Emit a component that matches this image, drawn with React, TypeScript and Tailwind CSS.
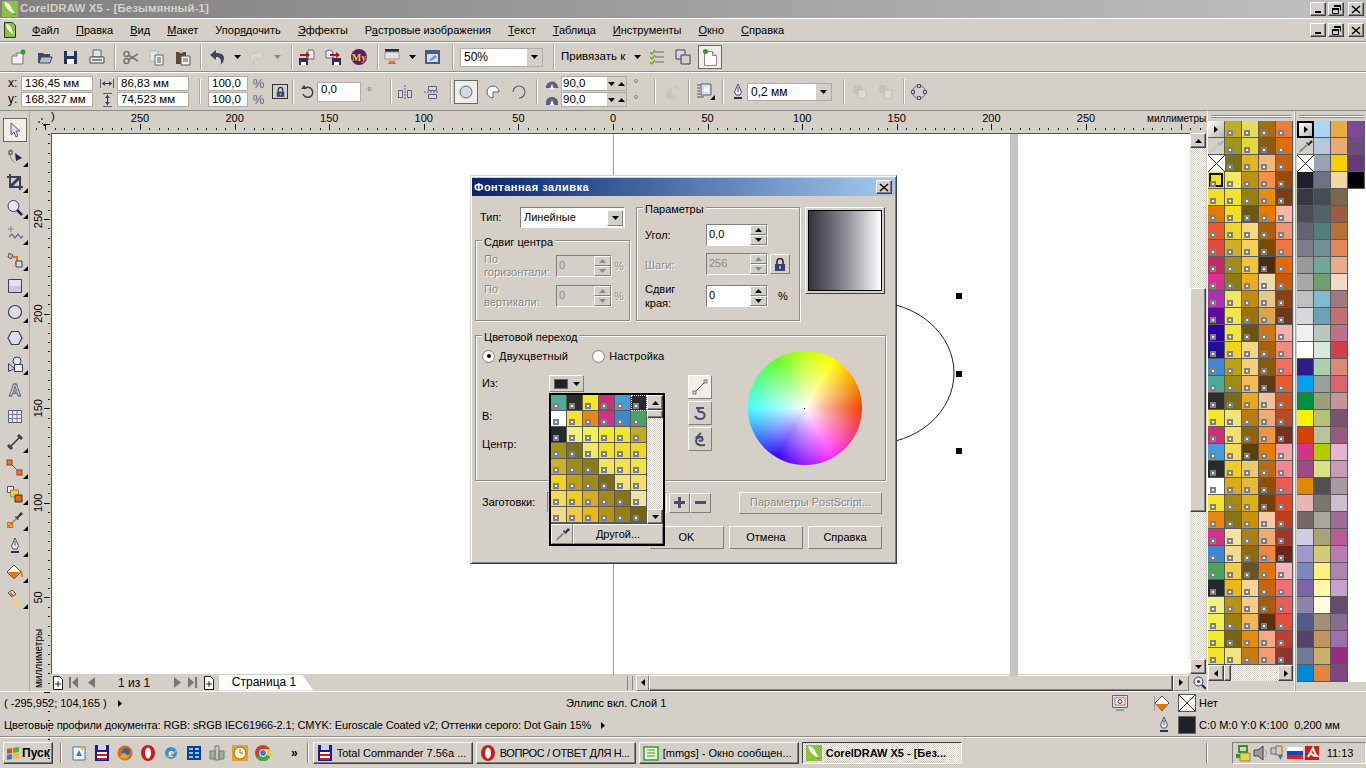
import React from 'react';

const RAISED = "border border-t-white border-l-white border-r-[#404040] border-b-[#404040] shadow-[inset_-1px_-1px_0_#808080]";
const FLAT = "border border-t-white border-l-white border-r-[#808080] border-b-[#808080]";
const SUNK = "border border-t-[#808080] border-l-[#808080] border-r-white border-b-white";
const DITHER = "bg-[repeating-conic-gradient(#ffffff_0_25%,#d4d0c8_0_50%)] bg-[length:2px_2px]";
const OFF = "text-[#8c8a84] [text-shadow:1px_1px_0_#ffffff]";

const Svg = ({ w = 16, h = 16, children }: { w?: number; h?: number; children?: React.ReactNode }) => (
  <svg width={w} height={h} viewBox={`0 0 ${w} ${h}`} className="block shrink-0 overflow-visible">{children}</svg>
);
const Down = ({ c = "#000" }: { c?: string }) => <Svg w={7} h={4}><path d="M0 0h7L3.5 4z" fill={c} /></Svg>;
const Up = ({ c = "#000" }: { c?: string }) => <Svg w={7} h={4}><path d="M0 4h7L3.5 0z" fill={c} /></Svg>;
const Left = () => <Svg w={4} h={7}><path d="M4 0v7L0 3.5z" fill="#000" /></Svg>;
const Right = () => <Svg w={4} h={7}><path d="M0 0v7l4-3.5z" fill="#000" /></Svg>;

const Sep = () => <div className="w-[2px] h-[25px] shrink-0 border-l border-[#a8a59d] bg-white" />;

// toolbar
const INew = () => <Svg><path d="M1 7l5-3h6v11H1z" fill="#f4f4f4" stroke="#777" /><path d="M1 7h5V4" fill="#ccc" stroke="#777" /><circle cx="12" cy="3" r="2.5" fill="#2e9e1e" /></Svg>;
const IOpen = () => <Svg><path d="M1 4h5l1 1h6v9H1z" fill="#3f4868" /><path d="M2 14l2-6h11l-2 6z" fill="#b9bccb" stroke="#3f4868" /></Svg>;
const ISave = () => <Svg><path d="M1 2h13v13H1z" fill="#2a315c" /><path d="M4 2h7v5H4z" fill="#d8d8e4" /><path d="M4 10h7v5H4z" fill="#fff" /></Svg>;
const IPrint = () => <Svg><path d="M4 1h8v7H4z" fill="#cfe8e8" stroke="#666" /><path d="M1 8h14v6H1z" fill="#eee" stroke="#444" /><path d="M3 11h10" stroke="#222" /></Svg>;
const ICut = () => <Svg><circle cx="3.5" cy="12" r="2.5" fill="none" stroke="#777" strokeWidth="1.5" /><circle cx="3.5" cy="5" r="2.5" fill="none" stroke="#777" strokeWidth="1.5" /><path d="M5 6l10 6M5 11l10-6" stroke="#777" strokeWidth="1.5" /></Svg>;
const ICopy = () => <Svg><path d="M1 2h8v10H1z" fill="#dfe9e4" stroke="#a9c4b8" /><path d="M6 6h8v10H6z" fill="#f4f4f4" stroke="#666" /><path d="M8 9h4M8 11h4M8 13h4" stroke="#555" /></Svg>;
const IPaste = () => <Svg><path d="M1 3h10v12H1z" fill="#5c4a34" /><circle cx="6" cy="2.5" r="2" fill="#c0c0c0" /><path d="M6 7h9v9H6z" fill="#f4f4f4" stroke="#555" /><path d="M8 10h5M8 12h5" stroke="#555" /></Svg>;
const IUndo = ({ c = "#3a4568" }: { c?: string }) => <Svg><path d="M7 1L1 6l6 5V8c3 0 5 1 5 5 0 1 0 2-1 3 3-2 4-4 4-7 0-4-4-5-8-5z" fill={c} /></Svg>;
const IRedo = () => <Svg><path d="M9 1l6 5-6 5V8c-3 0-5 1-5 5 0 1 0 2 1 3-3-2-4-4-4-7 0-4 4-5 8-5z" fill="#d9dad8" stroke="#c4c2bb" /></Svg>;
const IImp = () => <Svg><path d="M9 1h5l1 2v7H9z" fill="#eef0f4" stroke="#667" /><path d="M0 9h9v7H0z" fill="#2a315c" /><path d="M2 13h5v3H2z" fill="#fff" /><path d="M1 5h6V3l4 3-4 3V7H1z" fill="#b01818" /></Svg>;
const IExp = () => <Svg><path d="M1 2l4-1 3 2v6H1z" fill="#eef0f4" stroke="#667" /><path d="M7 9h9v7H7z" fill="#2a315c" /><path d="M9 13h5v3H9z" fill="#fff" /><path d="M5 5h6V3l4 3-4 3V7H5z" fill="#b01818" /></Svg>;
const IMy = () => <Svg><circle cx="8" cy="8" r="8" fill="#5a1a78" /><text x="8" y="11.5" textAnchor="middle" fontSize="10" fontWeight="700" fill="#f2c81e" fontFamily="Liberation Serif, serif">My</text></Svg>;
const ILaunch = () => <Svg w={14} h={16}><path d="M0 0h14v3H0z" fill="#23284a" /><path d="M0 3h14v7H0z" fill="#e3e3e6" stroke="#999" /><path d="M3 15l2-4 2 2 2-2 2 4z" fill="#f0641e" /></Svg>;
const IWelcome = () => <Svg><path d="M0 1h15v14H0z" fill="#4a5a86" /><path d="M2 5h11v8H2z" fill="#d4deee" /><path d="M4 11l6-5 2 2-6 4z" fill="#7a8cb4" /></Svg>;
const IOpts = () => <Svg w={14} h={16}><path d="M5 3h9M5 8h9M5 13h9" stroke="#64688a" /><path d="M0 3l2 2 3-4M0 8l2 2 3-4M0 13l2 2 3-4" stroke="#6ca81e" strokeWidth="1.4" fill="none" /></Svg>;
const IBoxes = () => <Svg><path d="M1 1h9v9H1z" fill="#d6d7e2" stroke="#3a3f5c" /><path d="M6 6h9v9H6z" fill="#d4d0c8" stroke="#3a3f5c" /></Svg>;
const IPage = () => <Svg w={16} h={18}><path d="M2.500 3.500h8l4 4v10h-12z" fill="#fff" stroke="#888" /><path d="M10.500 3.500v4h4" fill="#ddd" stroke="#888" /><circle cx="3.500" cy="3.500" r="2.500" fill="#2e9e1e" /></Svg>;

// property bar
const IW = () => <Svg w={14} h={9}><path d="M.5 0v9M13.500 0v9" stroke="#555c80" /><path d="M2 4.500h10" stroke="#333" /><path d="M2 4.500L5 2v5zM12 4.500L9 2v5z" fill="#3a4568" /></Svg>;
const IH = () => <Svg w={9} h={14}><path d="M0 .5h9M0 13.500h9" stroke="#555c80" /><path d="M4.500 2v10" stroke="#333" /><path d="M4.500 2L2 5h5zM4.500 12L2 9h5z" fill="#3a4568" /></Svg>;
const ILock = ({ w = 12, h = 13 }: { w?: number; h?: number }) => <svg width={w} height={h} viewBox="0 0 12 13" className="block shrink-0"><path d="M3 6V3.500a3 3 0 0 1 6 0V6" fill="none" stroke="#1a1a3a" strokeWidth="1.500" /><path d="M1 6h10v7H1z" fill="#3c4274" /><path d="M5 8h2v3H5z" fill="#aab" /></svg>;
const IRot = () => <Svg w={14} h={14}><path d="M3 4a5 5 0 1 1-1 5" fill="none" stroke="#3a3f5c" strokeWidth="1.500" /><path d="M0 4h6L3 0z" fill="#3a3f5c" /></Svg>;
const IMirH = () => <Svg><path d="M1.500 6.500h4v7h-4zM10.500 6.500h4v7h-4z" fill="#d6d7e2" stroke="#5c617e" /><path d="M8 1v14" stroke="#5c617e" strokeDasharray="2 1" /></Svg>;
const IMirV = () => <Svg><path d="M5.500 2.500h8v4h-8zM5.500 10.500h8v4h-8z" fill="#d6d7e2" stroke="#5c617e" /><path d="M1 8h14" stroke="#5c617e" strokeDasharray="2 1" /></Svg>;
const ICirc = () => <Svg w={14} h={14}><circle cx="7" cy="7" r="6" fill="#d6d7e2" stroke="#5c617e" /></Svg>;
const IPie = () => <Svg w={14} h={14}><path d="M7 7h6A6 6 0 1 0 7 13z" fill="#fff" stroke="#5c617e" /></Svg>;
const IArc = () => <Svg w={14} h={14}><path d="M13 7A6 6 0 1 0 7 13" fill="none" stroke="#5c617e" strokeWidth="1.200" transform="rotate(90 7 7)" /></Svg>;
const ICw = ({ flip = false }: { flip?: boolean }) => <Svg w={14} h={10}><path d={flip ? "M1 7a6 5 0 0 1 12 0v3H1z" : "M1 9a6 6 0 0 1 12-1l1 1H1z"} fill="#5c617e" /><path d="M5 10l2-5 2 5z" fill="#fff" /></Svg>;
const IPie2 = () => <Svg w={14} h={18}><path d="M6 5v6l5 3A6 6 0 1 1 6 5z" fill="#c6c4bd" /><path d="M8 2l3 2-3 2z" fill="#c6c4bd" /><path d="M11 4a4 4 0 0 1 2 4" stroke="#c6c4bd" fill="none" /></Svg>;
const IShadow = () => <Svg w={18} h={17}><path d="M0 2h7M0 5h3M0 8h3M0 11h3M0 14h7" stroke="#555" /><path d="M4 1h10v11H4z" fill="#dcdde6" stroke="#555c80" /><path d="M7 4h5v5H7z" fill="#f6f6f8" /><path d="M18 12v5h-5z" fill="#111" /></Svg>;
const IPen = () => <Svg w={10} h={16}><path d="M5 0l3.500 8-1.500 3H3L1.500 8z" fill="#eee" stroke="#4a4f6c" /><path d="M5 3v5" stroke="#4a4f6c" /><path d="M1 13h8v2H1z" fill="#2c3152" /></Svg>;
const IOrd = ({ flip = false }: { flip?: boolean }) => <Svg w={15} h={15}><path d={flip ? "M1 1h8v8H1z" : "M1 1h9v9H1z"} fill="#c6c4bd" /><path d="M6 6h8v8H6z" fill="#dcdad3" stroke="#c0beb6" /></Svg>;
const INodes = () => <Svg w={16} h={16}><circle cx="8" cy="8" r="6.500" fill="none" stroke="#5c617e" /><path d="M6.500.5h3v3h-3zM.5 6.500h3v3h-3zM12.500 6.500h3v3h-3zM6.500 12.500h3v3h-3z" fill="#c8c9d8" stroke="#4a4f6c" /></Svg>;

// toolbox
const TPick = () => <Svg><path d="M4 1v12l3-3 2 5 2-1-2-5h4z" fill="#dde" stroke="#5c617e" /></Svg>;
const TShape = () => <Svg><path d="M4 1C2 6 3 11 8 15" fill="none" stroke="#888" /><rect x="2" y="3" width="3" height="3" fill="#fff" stroke="#333" /><path d="M8 5l7 5-6 3z" fill="#23284a" /></Svg>;
const TCrop = () => <Svg><path d="M3 0v13h13M0 3h13v13" fill="none" stroke="#3a3f5c" strokeWidth="2" /><path d="M3 13L13 3" stroke="#3a3f5c" strokeWidth="3" /></Svg>;
const TZoom = () => <Svg><circle cx="6.500" cy="6" r="5.500" fill="#e6e7ef" stroke="#3a3f5c" /><path d="M10 10l5 5" stroke="#23284a" strokeWidth="2.500" /></Svg>;
const TFree = () => <Svg><path d="M4 0v6M1 3h6" stroke="#888" /><path d="M2 11l3-3 3 4 3-4 3 4 2-2" fill="none" stroke="#6c7090" strokeWidth="1.300" /></Svg>;
const TSmart = () => <Svg><path d="M2 1l4 2-2 4-3-2z" fill="#bbb" stroke="#555" /><path d="M6 5h4v6h-2" fill="none" stroke="#e07010" strokeWidth="2" /><path d="M9 9h6v6H9z" fill="#d8d8e4" stroke="#3a3f5c" /></Svg>;
const TRect = () => <Svg><path d="M1.500 1.500h13v13h-13z" fill="#e2e3ec" stroke="#3a3f5c" /><path d="M2 8h12v6H2z" fill="#c9cbd8" /></Svg>;
const TEll = () => <Svg><circle cx="8" cy="8" r="6.500" fill="#dcdde6" stroke="#3a3f5c" strokeWidth="1.200" /></Svg>;
const THex = () => <Svg><path d="M4.500 1.500h7L15 8l-3.500 6.500h-7L1 8z" fill="#dcdde6" stroke="#3a3f5c" strokeWidth="1.200" /></Svg>;
const TBasic = () => <Svg><circle cx="10" cy="5" r="4" fill="#e6e7ef" stroke="#3a3f5c" /><path d="M1.500 7.500l6 5-6 3z" fill="#cfd0dc" stroke="#3a3f5c" /><path d="M7.500 8.500h8v7h-8z" fill="#eceded" stroke="#3a3f5c" /></Svg>;
const TText = () => <Svg><text x="8" y="14" textAnchor="middle" fontSize="17" fontWeight="700" fill="#dcdde6" stroke="#4a4f6c" strokeWidth=".8" fontFamily="Liberation Sans, sans-serif">A</text></Svg>;
const TTable = () => <Svg><path d="M1.500 2.500h13v12h-13z" fill="#e8e8ee" stroke="#555c80" /><path d="M1 6.500h14M1 10.500h14M5.500 3v11M10 3v11" stroke="#777b96" /></Svg>;
const TDim = () => <Svg><path d="M2 14L14 2" stroke="#333" strokeWidth="1.500" /><path d="M0 12l4 4 2-2-4-4zM10 2l4 4 2-2-4-4z" fill="#3a3f5c" /></Svg>;
const TConn = () => <Svg><path d="M3 3l9 9" stroke="#555c80" /><rect x="0" y="0" width="5" height="5" fill="#f07818" stroke="#843" /><rect x="10" y="10" width="5" height="5" fill="#f07818" stroke="#843" /></Svg>;
const TBlend = () => <Svg><path d="M.5.5h6v6h-6z" fill="#eee" stroke="#555" /><path d="M3.500 4h8v7h-8z" fill="#fbc84a" stroke="#885" /><path d="M8 9h7v7H8z" fill="#f0620a" stroke="#333" /></Svg>;
const TDrop = () => <Svg><path d="M10 5l4-5 2 2-5 4z" fill="#23284a" /><path d="M9 4l3 3-1 1-3-3z" fill="#23284a" /><path d="M9 6l1 1-5 5-2 1 1-2z" fill="#6f8f90" /><path d="M0 10h6v6H0z" fill="#e07010" /><path d="M1 11h2v2H1zM3 13h2v2H3z" fill="#f4b060" /></Svg>;
const TFill = () => <Svg><path d="M7 1l7 7-7 7-7-7z" fill="#fff" stroke="#555" /><path d="M1 8h12l-6 7z" fill="#e8740c" /><path d="M13 6c2 1 2 4 2 7" stroke="#e8740c" strokeWidth="1.500" fill="none" /></Svg>;
const TIFill = () => <Svg><path d="M1 3l4-3 4 4-4 3z" fill="#ddd" stroke="#555" /><path d="M3 3l3 3" stroke="#e07010" strokeWidth="2" /><path d="M9 7l5 9H5z" fill="#f4cc80" /></Svg>;

const Tool = ({ active, tri = true, children }: { active?: boolean; tri?: boolean; children: React.ReactNode }) => (
  <div className="relative w-[24px] h-[26px] flex items-center justify-center">
    {active ? <div className="w-[24px] h-[24px] bg-[#f2efe8] border border-[#6c6a64] flex items-center justify-center">{children}</div> : children}
    {tri && !active && <svg width="5" height="5" className="absolute right-[-1px] bottom-[2px]"><path d="M5 0v5H0z" fill="#000" /></svg>}
  </div>
);

// task bar
const QIe = () => <Svg><circle cx="8" cy="8" r="6" fill="#3a90d8" /><text x="8" y="12" textAnchor="middle" fontSize="12" fontWeight="700" fill="#fff" fontFamily="Liberation Serif, serif">e</text><path d="M1 12c3 2 12-4 14-10" fill="none" stroke="#e8c83c" /></Svg>;
const QDesk = () => <Svg><path d="M2 2h12v13H2z" fill="#f6f6ff" stroke="#3a70c0" /><path d="M5 11l3-6 3 6z" fill="#3a80d0" /><path d="M9 3l3-2v5z" fill="#f0b020" /></Svg>;
const QTc = () => <Svg><path d="M1 0h14v16H1z" fill="#1c1c8c" /><path d="M4 0h8v5H4z" fill="#d0d0e8" /><path d="M3 7h10v2H3z" fill="#fff" /><path d="M3 9h10v2H3z" fill="#d81818" /><path d="M3 11h10v2H3z" fill="#fff" /><path d="M3 13h10v2H3z" fill="#d81818" /></Svg>;
const QFf = () => <Svg><circle cx="8" cy="8" r="7.500" fill="#d86a10" /><circle cx="9" cy="7" r="4" fill="#3a60a8" /><path d="M3 13c5 2 9 0 10-4-2 2-4 1-5-1-2 0-4 1-5 5z" fill="#f0a020" /></Svg>;
const QOp = () => <Svg><ellipse cx="8" cy="8" rx="7" ry="8" fill="#d01818" /><ellipse cx="8" cy="8" rx="3" ry="5.500" fill="#fff" /></Svg>;
const QTv = () => <Svg><path d="M1 1h14v14H1z" fill="#1838a0" /><path d="M3 3h4v2H3zM9 3h4v2H9zM3 7h4v2H3zM9 7h4v2H9zM3 11h4v2H3zM9 11h4v2H9z" fill="#7ad0f0" /></Svg>;
const QPlug = () => <Svg><path d="M6 1h4v14H6z" fill="#c8c8c8" stroke="#777" /><path d="M1 6h5v8H1zM10 6h5v8h-5z" fill="#98b890" stroke="#777" /></Svg>;
const QClock = () => <Svg><path d="M0 0h16v16H0z" fill="#e8a020" /><circle cx="8" cy="8" r="6" fill="#fff6d8" stroke="#a86808" /><path d="M8 4v4h3" stroke="#a86808" fill="none" /></Svg>;
const QCh = () => <Svg><circle cx="8" cy="8" r="8" fill="#d83a2c" /><path d="M8 8L1 12a8 8 0 0 0 7 4 8 8 0 0 0 7-4z" fill="#3caa44" /><path d="M8 8l7 4a8 8 0 0 0 0-8H8z" fill="#f0c828" /><circle cx="8" cy="8" r="3.500" fill="#3878d8" stroke="#fff" /></Svg>;
const Logo = () => <Svg><path d="M0 0h16v16H0z" fill="#8cc040" /><path d="M2 1c4 0 7 3 8 7l4 6-5-3C6 9 3 6 2 1z" fill="#f6f8ee" /><path d="M12 12l2 2-3-1z" fill="#27401a" /></Svg>;
const DocLogo = () => <Svg w={12} h={16}><path d="M.5.5h8l3 3v12h-11z" fill="#8cc040" stroke="#27401a" /><path d="M2 2c3 0 5 3 6 6l2 5-4-3C4 8 2 5 2 2z" fill="#f6f8ee" /></Svg>;
const Flag = () => <Svg w={14} h={13}><path d="M1 2l5-1v5l-5 1z" fill="#e84818" /><path d="M7 1l6-1v5l-6 1z" fill="#58b030" /><path d="M1 8l5-1v5l-5 1z" fill="#3878d8" /><path d="M7 7l6-1v5l-6 1z" fill="#f0c020" /></Svg>;

const P1: string[][] = [
  ["", "#bfae22", "#e8dc5e", "#a86c0c", "#ee7c3c"], ["", "#a19516", "#e6d644", "#8a5c10", "#e46c04"], ["", "#77701c", "#e2b622", "#f4b77c", "#c85e10"],
  ["#f2e224", "#f3ea60", "#bb9415", "#f48f44", "#984a08"], ["#f2e024", "#f2e42c", "#97800f", "#e48e10", "#7c3d10"], ["#e07a00", "#f2e024", "#6a5815", "#e67a00", "#f4b6a6"],
  ["#e85a2c", "#f0d820", "#f4da7c", "#ab6006", "#f09478"], ["#e04a3a", "#cdb028", "#f6d058", "#7a4a06", "#ee7844"], ["#c02c60", "#a08c18", "#f4c43c", "#4c2c10", "#e46808"],
  ["#d83090", "#8c7c14", "#eeac20", "#ecdcac", "#c45e0e"], ["#ae30b4", "#f2e65c", "#c68c08", "#e8c888", "#8c4010"], ["#600ca0", "#f2e44c", "#9a7408", "#e0a44c", "#6c3820"],
  ["#2c00a0", "#f4e440", "#6a5410", "#cc780c", "#f2b0b0"], ["#201090", "#eed41c", "#f4d684", "#aa6406", "#f08c84"], ["#4088d0", "#bca010", "#f6d078", "#8c5a0c", "#f0705c"],
  ["#4cac98", "#a08c14", "#f0bc58", "#5c3c14", "#e65c30"], ["#302c28", "#7a6c14", "#eca81c", "#f2c09c", "#cc5424"], ["#f2e824", "#f2e478", "#b87c10", "#f0ac78", "#b04c2c"],
  ["#c83078", "#f4e068", "#8c6410", "#f09444", "#782e20"], ["#449cd8", "#f4dc58", "#5c400c", "#e87c08", "#f0a0a8"], ["#282c2c", "#f4cc20", "#e8cc68", "#bc6810", "#f08898"],
  ["#ffffff", "#d8ac20", "#e4bc3c", "#8c5008", "#e85c58"], ["#f4e42c", "#a88814", "#e0b01c", "#744008", "#e0482c"], ["#e88814", "#887414", "#cc9008", "#f8c8a4", "#c03c20"],
  ["#d03088", "#f0e4a0", "#ac8014", "#f0a874", "#a03828"], ["#3c88d0", "#f0dc8c", "#8c6c10", "#ec8844", "#6c2418"], ["#48a460", "#f0cc48", "#685420", "#e47404", "#f4b4bc"],
  ["#24282c", "#ecb814", "#f4d498", "#c8640c", "#ee707c"], ["#f2f080", "#b89414", "#f8cc88", "#a85c08", "#e85c5c"], ["#f0f050", "#98800c", "#f4b45c", "#5c3010", "#e05040"],
  ["#f0ec28", "#786410", "#e88c0c", "#f4a888", "#bc4030"], ["#f2e428", "#f0e480", "#c87c10", "#f09c74", "#903430"],
];
const P2: string[][] = [
  ["", "#acd4f8", "#e8ac44", "#7c489c"], ["", "#b8c8d8", "#e8ac70", "#6c4c7c"], ["", "#98a4b4", "#f4d000", "#68387c"], ["#20202c", "#6c7484", "#f4d8a4", "#000000"],
  ["#383840", "#444c58", "#786850"], ["#4c4c54", "#506468", "#9c5c40"], ["#646470", "#508078", "#b87034"], ["#7c7c88", "#709098", "#e08858"], ["#989898", "#70a898", "#e8ac8c"],
  ["#a8a8ac", "#70a070", "#f4d8c8"], ["#c0c0c4", "#80bcd0", "#a07880"], ["#d8d8dc", "#6ca0b8", "#c07070"], ["#f0f0f0", "#b8c8bc", "#c07088"], ["#ffffff", "#d8e8d8", "#d04048"],
  ["#301c88", "#acd0ac", "#e08878"], ["#00a0ec", "#98a098", "#dc6470"], ["#00903c", "#98a080", "#c89498"], ["#fff200", "#b8c078", "#785470"], ["#d84000", "#b8c498", "#985880"],
  ["#d43488", "#b4cc00", "#e8b4d0"], ["#9c4c84", "#dce084", "#c89cb8"], ["#e08800", "#505050", "#a898a8"], ["#e8b4b4", "#787870", "#ccc0cc"], ["#786868", "#a8a898", "#a06c9c"],
  ["#d0cce4", "#a8a478", "#b85c98"], ["#a098c8", "#d4cc74", "#b87cb0"], ["#7c88c0", "#fff080", "#a888ac"], ["#7c64a8", "#fff8a8", "#c8a0cc"], ["#8c84ac", "#fffce0", "#644c70"],
  ["#505c88", "#a09078", "#886c90"], ["#504468", "#c49460", "#9c70ac"], ["#707c9c", "#ccb068", "#982c84"], ["#0088d8", "#e08440", "#804484"],
];
const POP: string[] = [
  "#4cac98", "#302c28", "#f2e824", "#c83078", "#449cd8", "#282c2c", "#ffffff", "#f4e42c", "#e88814", "#d03088", "#3c88d0", "#48a460",
  "#24282c", "#f2f080", "#f0f050", "#f0ec28", "#f2e428", "#bfae22", "#a19516", "#77701c", "#f3ea60", "#f2e224", "#f2e024", "#f0d820",
  "#cdb028", "#a08c18", "#8c7c14", "#f2e65c", "#f2e44c", "#f4e440", "#eed41c", "#bca010", "#a08c14", "#7a6c14", "#f2e478", "#f4e068",
  "#f4dc58", "#f4cc20", "#d8ac20", "#a88814", "#887414", "#f0e4a0", "#f0dc8c", "#f0cc48", "#ecb814", "#b89414", "#98800c", "#786410",
];

const Mark = () => <span className="absolute left-[2px] bottom-[1px] w-[6px] h-[6px] bg-[#eeeeee] border-2 border-[#808080]" />;
const XCell = () => <svg width="17" height="17" className="block bg-white"><path d="M0 0l17 17M17 0L0 17" stroke="#333" /></svg>;
const Dropper = ({ c = "#23284a" }: { c?: string }) => <Svg w={15} h={15}><path d="M10 5l3-4 2 2-4 3z" fill={c} /><path d="M9 3l3 3-1 1-3-3z" fill={c} /><path d="M9 5l1 1-6 6-3 2 1-3z" fill={c === "#23284a" ? "#6f8f90" : "#c8c8c8"} /></Svg>;

const Palette1 = () => (
  <div className="grid grid-cols-[repeat(5,17px)] auto-rows-[17px]">
    {P1.flatMap((r, i) => r.map((c, j) => {
      if (c === "" && i === 0) return <div key={`${i}${j}`} className="flex items-center justify-center border-r border-b border-[#5a5a5a] bg-gradient-to-br from-white to-[#b8b6b0]"><Right /></div>;
      if (c === "" && i === 1) return <div key={`${i}${j}`} className="flex items-center justify-center border-r border-b border-[#5a5a5a] bg-[#d4d0c8]"><Dropper c="#b0aea8" /></div>;
      if (c === "") return <div key={`${i}${j}`} className="border-r border-b border-[#5a5a5a]"><XCell /></div>;
      return (
        <div key={`${i}${j}`} className="relative border-r border-b border-[#5a5a5a]" style={{ backgroundColor: c }}>
          {i === 3 && j === 0 && <span className="absolute inset-[1px] border-2 border-black" />}
          <Mark />
        </div>
      );
    }))}
  </div>
);

const Palette2 = () => (
  <div className="grid grid-cols-[repeat(4,17px)] auto-rows-[17px]">
    {P2.flatMap((r, i) => [...r, ...(r.length === 3 ? ["w"] : [])].map((c, j) => {
      if (c === "w") return <div key={`${i}${j}`} />;
      if (c === "" && i === 0) return <div key={`${i}${j}`} className="flex items-center justify-center border-2 border-black bg-gradient-to-br from-white to-[#b8b6b0]"><Right /></div>;
      if (c === "" && i === 1) return <div key={`${i}${j}`} className="flex items-center justify-center border-r border-b border-[#5a5a5a] bg-[#d4d0c8]"><Dropper /></div>;
      if (c === "") return <div key={`${i}${j}`} className="border-r border-b border-[#5a5a5a]"><XCell /></div>;
      return <div key={`${i}${j}`} className="border-r border-b border-[#5a5a5a]" style={{ backgroundColor: c }} />;
    }))}
  </div>
);

const TopRuler = () => {
  const ticks: number[] = [];
  for (let k = -62; k <= 62; k++) ticks.push(583 + k * 9.46);
  return (
    <svg width="1176" height="22" className="block overflow-visible">
      {ticks.map((x, i) => {
        const big = (i - 62) % 10 === 0;
        return <rect key={i} x={Math.round(x)} y={big ? 13 : 17} width="1" height={big ? 6 : 2} fill="#111" />;
      })}
      {[250, 200, 150, 100, 50, 0, 50, 100, 150, 200, 250].map((v, i) => (
        <text key={i} x={110 + i * 94.6} y="11" textAnchor="middle" fontSize="11" fill="#000">{v}</text>
      ))}
      <text x="1117" y="11" fontSize="10" fill="#000">миллиметры</text>
      <text x="21" y="9" fontSize="11" fill="#000">)</text>
      <path d="M12 7v3M8 11h3M14 13v2M12 12l4 4" stroke="#000" strokeDasharray="2 1" fill="none" />
    </svg>
  );
};

const LeftRuler = () => {
  const ticks: number[] = [];
  for (let k = -10; k <= 60; k++) ticks.push(219 - 133 + k * 9.46);
  return (
    <svg width="21" height="560" className="block overflow-visible">
      {ticks.map((y, i) => {
        const big = (i - 10) % 10 === 0;
        return <rect key={i} x={big ? 14 : 18} y={Math.round(y)} width={big ? 6 : 2} height="1" fill="#111" />;
      })}
      {[250, 200, 150, 100, 50].map((v, i) => (
        <text key={i} transform={`translate(12 ${86 + i * 94.6}) rotate(-90)`} textAnchor="middle" fontSize="11" fill="#000">{v}</text>
      ))}
      <text transform="translate(12 555) rotate(-90)" fontSize="10" fill="#000">миллиметры</text>
    </svg>
  );
};

const Spin = ({ w, off, val }: { w: string; off?: boolean; val: string }) => (
  <div className={`${w} h-[22px] shrink-0 flex ${SUNK} ${off ? "bg-[#d4d0c8]" : "bg-white"}`}>
    <span className={`flex-1 pl-[2px] leading-[18px] ${off ? "text-[#8c8a84]" : ""}`}>{val}</span>
    <div className="w-[17px] flex flex-col bg-[#d4d0c8]">
      <div className={`flex-1 flex items-center justify-center ${FLAT}`}><Up c={off ? "#8c8a84" : "#000"} /></div>
      <div className={`flex-1 flex items-center justify-center ${FLAT}`}><Down c={off ? "#8c8a84" : "#000"} /></div>
    </div>
  </div>
);

const Group = ({ title, className, children }: { title: string; className: string; children?: React.ReactNode }) => (
  <div className={`relative border border-[#8e8c86] shadow-[1px_1px_0_#ffffff,inset_1px_1px_0_#ffffff] ${className}`}>
    <span className="absolute top-[-6px] left-[6px] px-[2px] bg-[#d4d0c8] leading-[14px]">{title}</span>
    {children}
  </div>
);

const Btn = ({ w, off, children }: { w: string; off?: boolean; children: React.ReactNode }) => (
  <div className={`${w} flex items-center justify-center ${FLAT} ${off ? OFF : ""}`}>{children}</div>
);

const Radio = ({ on }: { on?: boolean }) => (
  <div className="w-[13px] h-[13px] rounded-full bg-white border border-[#808080] flex items-center justify-center">{on && <div className="w-[4px] h-[4px] rounded-full bg-black" />}</div>
);

const Dialog = () => (
  <div className="absolute left-[470px] top-[175px] w-[427px] h-[389px] bg-[#d4d0c8] border border-t-[#d4d0c8] border-l-[#d4d0c8] border-r-[#404040] border-b-[#404040] shadow-[inset_1px_1px_0_#ffffff,inset_-1px_-1px_0_#808080] text-[11px] text-black p-[2px] flex flex-col">
    <div className="h-[18px] -mx-[1px] flex items-center justify-between pl-[2px] pr-[3px] bg-gradient-to-r from-[#0a246a] to-[#a6caf0]">
      <span className="font-bold text-white text-[11px] tracking-[0.5px]">Фонтанная заливка</span>
      <div className={`w-[16px] h-[14px] bg-[#d4d0c8] flex items-center justify-center ${RAISED}`}><Svg w={8} h={7}><path d="M0 0l8 7M8 0L0 7" stroke="#000" strokeWidth="1.500" /></Svg></div>
    </div>

    <div className="flex mt-[11px] ml-[2px]">
      <div className="w-[155px]">
        <div className="flex items-center h-[21px]">
          <span className="ml-[5px] w-[40px]">Тип:</span>
          <div className={`w-[105px] h-[21px] bg-white flex items-center justify-between pl-[3px] pr-[1px] ${SUNK}`}>
            <span>Линейные</span>
            <div className={`w-[16px] h-[16px] bg-[#d4d0c8] flex items-center justify-center ${FLAT}`}><Down /></div>
          </div>
        </div>
        <Group title="Сдвиг центра" className="h-[81px] mt-[12px]">
          <div className="flex items-center mt-[12px] ml-[8px]">
            <span className={`w-[72px] leading-[13px] ${OFF}`}>По<br />горизонтали:</span>
            <Spin w="w-[56px]" off val="0" />
            <span className={`ml-[2px] ${OFF}`}>%</span>
          </div>
          <div className="flex items-center mt-[4px] ml-[8px]">
            <span className={`w-[72px] leading-[13px] ${OFF}`}>По<br />вертикали:</span>
            <Spin w="w-[56px]" off val="0" />
            <span className={`ml-[2px] ${OFF}`}>%</span>
          </div>
        </Group>
      </div>
      <Group title="Параметры" className="w-[164px] h-[114px] ml-[6px]">
        <div className="flex items-center mt-[16px] ml-[8px]">
          <span className="w-[61px]">Угол:</span>
          <Spin w="w-[62px]" val="0,0" />
        </div>
        <div className="flex items-center mt-[7px] ml-[8px]">
          <span className={`w-[61px] mt-[2px] ${OFF}`}>Шаги:</span>
          <Spin w="w-[62px]" off val="256" />
          <div className={`ml-[2px] w-[20px] h-[20px] flex items-center justify-center ${FLAT}`}><ILock /></div>
        </div>
        <div className="flex items-center mt-[7px] ml-[8px]">
          <span className="w-[61px] leading-[14px]">Сдвиг<br />края:</span>
          <Spin w="w-[62px]" val="0" />
          <span className="ml-[10px]">%</span>
        </div>
      </Group>
      <div className="w-[80px] h-[87px] ml-[5px] p-[2px] border border-t-white border-l-white border-r-[#404040] border-b-[#404040] bg-[#d4d0c8]">
        <div className="w-full h-full border border-black bg-gradient-to-r from-[#34343e] via-[#8a8a94] to-white" />
      </div>
    </div>

    <Group title="Цветовой переход" className="w-[411px] h-[146px] ml-[2px] mt-[14px] flex">
      <div className="w-[212px] pl-[6px]">
        <div className="flex items-center mt-[13px] h-[14px]">
          <Radio on />
          <span className="ml-[4px] tracking-[0.2px]">Двухцветный</span>
          <div className="ml-[24px]"><Radio /></div>
          <span className="ml-[4px] tracking-[0.1px]">Настройка</span>
        </div>
        <div className="flex items-center mt-[12px]">
          <span className="w-[67px]">Из:</span>
          <div className={`w-[35px] h-[17px] flex items-center justify-center gap-[5px] ${FLAT}`}>
            <div className="w-[14px] h-[10px] bg-[#20202c] border border-[#666]" />
            <Down />
          </div>
        </div>
        <div className="mt-[16px]">В:</div>
        <div className="mt-[11px]">Центр:</div>
      </div>
      <div className="mt-[39px] flex flex-col gap-[2px]">
        <div className="w-[24px] h-[24px] bg-[#f2efe8] border border-t-white border-l-white border-r-[#808080] border-b-[#808080] flex items-center justify-center"><Svg w={14} h={14}><path d="M2 12L12 2" stroke="#4a4f6c" /><rect x="0" y="11" width="3" height="3" fill="#dde" stroke="#333" strokeWidth=".6" /><rect x="11" y="0" width="3" height="3" fill="#dde" stroke="#333" strokeWidth=".6" /></Svg></div>
        <div className={`w-[24px] h-[24px] flex items-center justify-center ${FLAT}`}><Svg w={14} h={15}><path d="M3 2h8M9 2c-5 0-5 4-1 4 5 0 5 7-1 7-2 0-4-1-5-3" fill="none" stroke="#4a4f6c" strokeWidth="2" /></Svg></div>
        <div className={`w-[24px] h-[24px] flex items-center justify-center ${FLAT}`}><Svg w={14} h={15}><path d="M12 13c-6 1-9-1-9-4s4-5 6-3-1 4-3 2M8 1L4 5h6" fill="none" stroke="#4a4f6c" strokeWidth="2" /></Svg></div>
      </div>
      <div className="relative w-[114px] h-[114px] ml-[36px] mt-[15px] rounded-full bg-[radial-gradient(circle_closest-side,#ffffff_0%,rgba(255,255,255,0.55)_40%,rgba(255,255,255,0)_100%),conic-gradient(#c0ff10_0deg,#ffff00_30deg,#f04000_90deg,#ff30ff_150deg,#3000ff_210deg,#40ffff_270deg,#60ff20_330deg,#c0ff10_360deg)]">
        <span className="absolute left-[56px] top-[57px] w-[1px] h-[1px] bg-black" />
      </div>
    </Group>

    <div className="flex items-center h-[21px] mt-[11px] ml-[9px]">
      <span className="w-[65px]">Заготовки:</span>
      <div className={`w-[120px] h-[21px] ${SUNK}`} />
      <div className="ml-[2px] flex h-[20px]">
        <Btn w="w-[21px]"><Svg w={11} h={11}><path d="M4 0h3v4h4v3H7v4H4V7H0V4h4z" fill="#4a4f6c" /></Svg></Btn>
        <Btn w="w-[21px]"><Svg w={11} h={3}><path d="M0 0h11v3H0z" fill="#4a4f6c" /></Svg></Btn>
      </div>
      <Btn w="w-[143px] h-[22px] ml-[28px]" off>Параметры PostScript...</Btn>
    </div>
    <div className="flex h-[23px] mt-[13px] ml-[176px] gap-[5px]">
      <Btn w="w-[75px]">OK</Btn>
      <Btn w="w-[74px]">Отмена</Btn>
      <Btn w="w-[74px]">Справка</Btn>
    </div>

    <div className="absolute left-[78px] top-[217px] w-[116px] h-[153px] bg-[#d4d0c8] border-2 border-black flex flex-col">
      <div className="flex h-[129px]">
        <div className="w-[96px] grid grid-cols-[repeat(6,16px)] auto-rows-[16px] bg-[#555]">
          {POP.map((c, i) => (
            <div key={i} className={`relative border-r border-b border-[#5a5a5a] ${i === 5 ? "outline-1 outline-dotted outline-white -outline-offset-1" : ""}`} style={{ backgroundColor: c }}><Mark /></div>
          ))}
        </div>
        <div className={`w-[16px] flex flex-col ${DITHER}`}>
          <div className={`h-[15px] bg-[#d4d0c8] flex items-center justify-center ${RAISED}`}><Up /></div>
          <div className={`h-[8px] bg-[#d4d0c8] ${RAISED}`} />
          <div className="flex-1" />
          <div className={`h-[15px] bg-[#d4d0c8] flex items-center justify-center ${RAISED}`}><Down /></div>
        </div>
      </div>
      <div className="flex flex-1">
        <div className={`w-[22px] flex items-center justify-center ${FLAT}`}><Dropper /></div>
        <div className={`flex-1 flex items-center justify-center ${FLAT}`}>Другой...</div>
      </div>
    </div>
  </div>
);

const Task = ({ w, icon, text, active, track = "" }: { w: string; icon: React.ReactNode; text: string; active?: boolean; track?: string }) => (
  <div className={`${w} h-[22px] flex items-center gap-[4px] pl-[3px] overflow-hidden whitespace-nowrap ${active ? `font-bold text-black ${DITHER} border border-t-[#404040] border-l-[#404040] border-r-white border-b-white` : RAISED}`}>
    {icon}<span className={track}>{text}</span>
  </div>
);

const U = ({ p = "", u, r = "" }: { p?: string; u: string; r?: string }) => <span className="whitespace-nowrap">{p}<span className="underline">{u}</span>{r}</span>;
const Win = () => (
  <div className="flex gap-[2px]">
    <div className={`w-[16px] h-[14px] bg-[#d4d0c8] flex items-end justify-center pb-[2px] ${RAISED}`}><div className="w-[6px] h-[2px] bg-black" /></div>
    <div className={`w-[16px] h-[14px] bg-[#d4d0c8] flex items-center justify-center ${RAISED}`}><Svg w={9} h={9}><path d="M2.500.5h6v5M.5 3.500h6v5h-6z" fill="none" stroke="#000" /><path d="M2 0h7v2H2zM0 3h7v2H0z" fill="#000" /></Svg></div>
    <div className={`w-[16px] h-[14px] bg-[#d4d0c8] flex items-center justify-center ml-[2px] ${RAISED}`}><Svg w={8} h={7}><path d="M0 0l8 7M8 0L0 7" stroke="#000" strokeWidth="1.500" /></Svg></div>
  </div>
);
const PIn = ({ w, v, h = "h-[15px]" }: { w: string; v: string; h?: string }) => (
  <div className={`${w} ${h} bg-white border border-[#b0ada5] pl-[3px] leading-[13px] text-[11.500px]`}>{v}</div>
);
const Col = ({ className = "", children }: { className?: string; children: React.ReactNode }) => (
  <div className={`flex flex-col gap-[1px] shrink-0 ${className}`}>{children}</div>
);
const Row2 = ({ children }: { children: React.ReactNode }) => <div className="h-[15px] flex items-center justify-center">{children}</div>;
const SpinP = ({ v }: { v: string }) => (
  <div className="w-[66px] h-[15px] bg-white border border-[#b0ada5] pl-[1px] flex items-center justify-between leading-[13px] text-[11.500px]">
    {v}
    <div className="flex h-full bg-[#d4d0c8] items-center gap-[3px] px-[1px]"><Down /><Up /></div>
  </div>
);
const NavI = ({ d }: { d: string }) => <Svg w={10} h={11}><path d={d} fill="#777" /></Svg>;
const AddPage = () => <Svg w={10} h={14}><path d="M.5.5h6l3 3v10h-9z" fill="#fff" stroke="#222" /><path d="M5 5v6M2 8h6" stroke="#222" /></Svg>;
const Slot = ({ w = "w-[26px]", ml = "", children }: { w?: string; ml?: string; children: React.ReactNode }) => (
  <div className={`${w} ${ml} shrink-0 flex items-center justify-center`}>{children}</div>
);

export default function App() {
  return (
    <div className="w-[1366px] h-[768px] overflow-hidden relative flex flex-col bg-[#d4d0c8] text-black text-[11px] [font-family:'Liberation_Sans',sans-serif]">
      {/* заголовок */}
      <div className="h-[18px] flex items-center bg-gradient-to-r from-[#808080] to-[#c0c0c0] pl-[2px] pr-[2px] justify-between">
        <div className="flex items-center gap-[2px]">
          <Logo />
          <span className="font-bold text-[#d4d0c8] text-[11.500px] tracking-[0.1px]">CorelDRAW X5 - [Безымянный-1]</span>
        </div>
        <Win />
      </div>
      <div className="h-[1px] bg-white" />

      {/* меню */}
      <div className="h-[23px] flex items-center pl-[4px] pr-[2px] border-b border-[#8e8c86] text-[11px]">
        <DocLogo />
        <div className="flex ml-[16px] gap-[17px]">
          <U u="Ф" r="айл" />
          <U u="П" r="равка" />
          <U u="В" r="ид" />
          <U u="М" r="акет" />
          <U p="Упор" u="я" r="дочить" />
          <U u="Э" r="ффекты" />
          <U p="Р" u="а" r="стровые изображения" />
          <U u="Т" r="екст" />
          <U u="Т" r="аблица" />
          <U u="И" r="нструменты" />
          <U u="О" r="кно" />
          <U u="С" r="правка" />
        </div>
        <div className="ml-auto"><Win /></div>
      </div>

      {/* стандартная панель */}
      <div className="h-[30px] flex items-center pl-[6px] border-b border-[#8e8c86] border-t border-t-white">
        <Slot><INew /></Slot><Slot><IOpen /></Slot><Slot><ISave /></Slot><Slot><IPrint /></Slot>
        <div className="ml-[4px]"><Sep /></div>
        <Slot ml="ml-[2px]"><ICut /></Slot><Slot><ICopy /></Slot><Slot><IPaste /></Slot>
        <div className="ml-[4px]"><Sep /></div>
        <Slot ml="ml-[2px]"><IUndo /></Slot><Slot w="w-[14px]"><Down /></Slot>
        <Slot><IRedo /></Slot><Slot w="w-[14px]"><Down c="#8c8a84" /></Slot>
        <div className="ml-[7px]"><Sep /></div>
        <Slot ml="ml-[1px]"><IImp /></Slot><Slot><IExp /></Slot><Slot><IMy /></Slot>
        <div className="ml-[5px]"><Sep /></div>
        <Slot><ILaunch /></Slot><Slot w="w-[14px]"><Down /></Slot>
        <Slot ml="ml-[1px]"><IWelcome /></Slot>
        <div className="ml-[6px]"><Sep /></div>
        <div className="ml-[6px] w-[83px] h-[19px] bg-white border border-[#b0ada5] flex items-center justify-between pl-[3px] text-[12px]">
          50%
          <div className="w-[15px] h-full bg-[#d4d0c8] flex items-center justify-center"><Down /></div>
        </div>
        <div className="ml-[10px]"><Sep /></div>
        <span className="ml-[6px] w-[64px] text-[11.500px] whitespace-nowrap">Привязать к</span>
        <Slot w="w-[14px]" ml="ml-[5px]"><Down /></Slot>
        <Slot><IOpts /></Slot><Slot><IBoxes /></Slot>
        <div className="ml-[2px] w-[24px] h-[24px] bg-[#f2efe8] border border-[#6c6a64] flex items-center justify-center"><IPage /></div>
      </div>

      {/* панель свойств */}
      <div className="h-[39px] flex items-center pl-[8px] border-b border-[#8e8c86] border-t border-t-white text-[12px]">
        <Col className="w-[13px]"><div className="h-[15px] leading-[15px]">x:</div><div className="h-[15px] leading-[15px]">y:</div></Col>
        <Col><PIn w="w-[72px]" v="136,45 мм" /><PIn w="w-[72px]" v="168,327 мм" /></Col>
        <Col className="w-[14px] ml-[7px]"><Row2><IW /></Row2><Row2><IH /></Row2></Col>
        <Col className="ml-[3px]"><PIn w="w-[72px]" v="86,83 мм" /><PIn w="w-[72px]" v="74,523 мм" /></Col>
        <div className="ml-[10px]"><Sep /></div>
        <Col className="ml-[7px]"><PIn w="w-[40px]" v="100,0" /><PIn w="w-[40px]" v="100,0" /></Col>
        <Col className="ml-[5px] w-[11px] text-[#5c617e] text-[13px]"><Row2>%</Row2><Row2>%</Row2></Col>
        <div className="ml-[8px] w-[16px] h-[15px] border border-[#333] flex items-center justify-center"><ILock w={9} h={10} /></div>
        <div className="ml-[4px]"><Sep /></div>
        <Slot w="w-[14px]" ml="ml-[7px]"><IRot /></Slot>
        <PIn w="w-[44px] ml-[2px]" h="h-[20px]" v="0,0" />
        <span className="ml-[6px] w-[8px] text-[#666]">°</span>
        <div className="ml-[15px]"><Sep /></div>
        <Slot w="w-[16px]" ml="ml-[5px]"><IMirH /></Slot>
        <Slot w="w-[16px]" ml="ml-[10px]"><IMirV /></Slot>
        <div className="ml-[11px]"><Sep /></div>
        <div className="ml-[2px] w-[24px] h-[24px] bg-[#f2efe8] border border-[#6c6a64] flex items-center justify-center"><ICirc /></div>
        <Slot w="w-[14px]" ml="ml-[8px]"><IPie /></Slot>
        <Slot w="w-[14px]" ml="ml-[12px]"><IArc /></Slot>
        <div className="ml-[10px]"><Sep /></div>
        <Col className="w-[14px] ml-[7px]"><Row2><ICw /></Row2><Row2><ICw flip /></Row2></Col>
        <Col className="ml-[2px]"><SpinP v="90,0" /><SpinP v="90,0" /></Col>
        <Col className="ml-[4px] w-[10px] text-[#666]"><Row2>°</Row2><Row2>°</Row2></Col>
        <div className="ml-[13px]"><Sep /></div>
        <Slot w="w-[14px]" ml="ml-[10px]"><IPie2 /></Slot>
        <div className="ml-[8px]"><Sep /></div>
        <Slot w="w-[18px]" ml="ml-[7px]"><IShadow /></Slot>
        <div className="ml-[7px]"><Sep /></div>
        <Slot w="w-[11px]" ml="ml-[8px]"><IPen /></Slot>
        <div className="ml-[4px] w-[85px] h-[18px] bg-white border border-[#b0ada5] flex items-center justify-between pl-[3px]">
          0,2 мм
          <div className="w-[15px] h-full bg-[#d4d0c8] flex items-center justify-center"><Down /></div>
        </div>
        <div className="ml-[11px]"><Sep /></div>
        <Slot w="w-[15px]" ml="ml-[7px]"><IOrd /></Slot>
        <Slot w="w-[15px]" ml="ml-[11px]"><IOrd flip /></Slot>
        <div className="ml-[10px]"><Sep /></div>
        <Slot w="w-[16px]" ml="ml-[6px]"><INodes /></Slot>
      </div>

      {/* рабочая область */}
      <div className="h-[581px] flex border-b border-white">
        <div className="w-[30px] shrink-0 pt-[6px] pl-[3px] border-r border-[#a8a59d]">
          <Tool active><TPick /></Tool><Tool><TShape /></Tool><Tool><TCrop /></Tool><Tool><TZoom /></Tool><Tool><TFree /></Tool>
          <Tool><TSmart /></Tool><Tool><TRect /></Tool><Tool><TEll /></Tool><Tool><THex /></Tool><Tool><TBasic /></Tool>
          <Tool tri={false}><TText /></Tool><Tool tri={false}><TTable /></Tool><Tool><TDim /></Tool><Tool><TConn /></Tool><Tool><TBlend /></Tool>
          <Tool><TDrop /></Tool><Tool><IPen /></Tool><Tool><TFill /></Tool><Tool><TIFill /></Tool>
        </div>
        <div className="w-[1177px] shrink-0 flex flex-col">
          <TopRuler />
          <div className="flex flex-1 min-h-0">
            <LeftRuler />
            <div className="flex-1 flex flex-col min-w-0">
              <div className="flex h-[542px]">
                <div className="w-[1139px] relative bg-white border-t border-l border-[#555]">
                  <svg width="1139" height="542" className="absolute inset-0">
                    <rect x="561" y="0" width="1" height="542" fill="#a0a0a0" />
                    <rect x="958" y="0" width="8" height="542" fill="#c4c4c4" />
                    <ellipse cx="820" cy="239" rx="82" ry="71" fill="none" stroke="#222" />
                    <rect x="904" y="159" width="6" height="6" fill="#000" />
                    <rect x="904" y="237" width="6" height="6" fill="#000" />
                    <rect x="904" y="314" width="6" height="6" fill="#000" />
                  </svg>
                </div>
                <div className="w-[16px] flex flex-col bg-white">
                  <div className={`h-[15px] bg-[#d4d0c8] flex items-center justify-center ${RAISED}`}><Up /></div>
                  <div className={`h-[140px] ${DITHER}`} />
                  <div className={`h-[224px] bg-[#d4d0c8] ${RAISED}`} />
                  <div className={`flex-1 ${DITHER}`} />
                  <div className={`h-[15px] bg-[#d4d0c8] flex items-center justify-center ${RAISED}`}><Down /></div>
                </div>
              </div>
              <div className="h-[17px] flex items-center pl-[2px]">
                <Slot w="w-[10px]"><AddPage /></Slot>
                <Slot w="w-[10px]" ml="ml-[6px]"><NavI d="M0 0h2v11H0zM9 0v11L3 5.500z" /></Slot>
                <Slot w="w-[10px]" ml="ml-[7px]"><NavI d="M9 0v11L2 5.500z" /></Slot>
                <span className="ml-[22px] w-[38px] text-[12px] whitespace-nowrap">1 из 1</span>
                <Slot w="w-[10px]" ml="ml-[17px]"><NavI d="M1 0v11l7-5.500z" /></Slot>
                <Slot w="w-[10px]" ml="ml-[5px]"><NavI d="M0 0v11l6-5.500zM7 0h2v11H7z" /></Slot>
                <Slot w="w-[10px]" ml="ml-[6px]"><AddPage /></Slot>
                <div className="ml-[5px] w-[95px] h-[16px] bg-white text-[12px] pl-[13px] leading-[15px] [clip-path:polygon(0_0,88%_0,100%_100%,0_100%)]">Страница 1</div>
                <div className="ml-[314px] w-[6px] h-[14px] border-x border-[#888]" />
                <div className={`ml-[3px] w-[13px] h-[16px] flex items-center justify-center ${FLAT}`}><Left /></div>
                <div className={`w-[526px] h-[16px] ${RAISED}`} />
                <div className={`w-[16px] h-[16px] flex items-center justify-center ${FLAT}`}><Right /></div>
                <div className="ml-[2px] w-[16px] h-[16px] flex items-center justify-center"><svg width="13" height="14"><circle cx="5.500" cy="5.500" r="4.500" fill="#e6e7ef" stroke="#3a3f5c" /><circle cx="5.500" cy="5.500" r="1.500" fill="#3a3f5c" /><path d="M9 9l4 4" stroke="#23284a" strokeWidth="2" /></svg></div>
              </div>
            </div>
          </div>
        </div>
        <div className="w-[88px] shrink-0 border-l border-r border-white flex flex-col">
          <div className="h-[9px] mt-[1px] mx-[3px] flex flex-col justify-center gap-[1px]"><div className="h-[3px] border-y border-[#8e8c86] bg-white" /></div>
          <Palette1 />
          <div className="flex h-[16px] w-[85px]">
            <div className={`w-[16px] flex items-center justify-center ${RAISED}`}><Left /></div>
            <div className={`w-[7px] ${RAISED}`} />
            <div className={`flex-1 ${DITHER}`} />
            <div className={`w-[15px] flex items-center justify-center ${RAISED}`}><Right /></div>
          </div>
        </div>
        <div className="w-[71px] shrink-0 border-l border-[#a8a59d] pl-[1px] flex flex-col">
          <div className="h-[9px] mt-[1px] mx-[2px] flex flex-col justify-center"><div className="h-[3px] border-y border-[#8e8c86] bg-white" /></div>
          <div className="bg-white h-[561px]"><Palette2 /></div>
        </div>
      </div>

      {/* строка состояния */}
      <div className="h-[45px] flex flex-col border-b border-[#8e8c86] px-[4px] text-[11px]">
        <div className="h-[22px] flex items-center relative">
          <span className="w-[114px]">( -295,952; 104,165 )</span>
          <Right />
          <span className="ml-[444px] w-[120px]">Эллипс вкл. Слой 1</span>
          <div className="ml-[426px]"><Svg w={16} h={17}><path d="M.5.5h15v12H.5z" fill="#d8dce8" stroke="#667" /><path d="M3 3h10v7H3z" fill="#fff" stroke="#c66" /><circle cx="8" cy="6.500" r="2" fill="none" stroke="#333" /><path d="M4 15h8" stroke="#667" /></Svg></div>
          <div className="ml-[26px] w-[1px] h-[15px] bg-[#999]" />
          <div><Svg w={16} h={17}><path d="M7 1l7 7-7 8-7-8z" fill="#fff" stroke="#555" /><path d="M1 9h12l-6 7z" fill="#e8740c" /></Svg></div>
          <div className="ml-[7px] w-[18px] h-[18px] border border-[#555]"><svg width="16" height="16" className="block bg-white"><path d="M0 0l16 16M16 0L0 16" stroke="#333" /></svg></div>
          <span className="ml-[3px]">Нет</span>
        </div>
        <div className="h-[22px] flex items-center">
          <span className="w-[597px] whitespace-nowrap tracking-[-0.1px]">Цветовые профили документа: RGB: sRGB IEC61966-2.1; CMYK: Euroscale Coated v2; Оттенки серого: Dot Gain 15%</span>
          <Right />
          <div className="ml-[554px]"><IPen /></div>
          <div className="ml-[9px] w-[18px] h-[18px] bg-[#20202c] border border-[#666]" />
          <span className="ml-[3px] whitespace-pre">C:0 M:0 Y:0 K:100  0,200 мм</span>
        </div>
      </div>

      {/* панель задач */}
      <div className="flex-1 flex items-center pl-[3px] border-t border-white text-[11px]">
        <div className={`w-[50px] h-[22px] flex items-center gap-[2px] pl-[2px] font-bold text-[12px] ${RAISED}`}><Flag />Пуск</div>
        <div className="ml-[7px] w-[2px] h-[20px] bg-white border-l border-[#808080]" />
        <div className="ml-[9px] flex gap-[7px]">
          <QDesk /><QTc /><QFf /><QOp /><QIe /><QTv /><QPlug /><QClock /><QCh />
        </div>
        <span className="ml-[20px] font-bold text-[12px]">»</span>
        <div className="ml-[9px] w-[2px] h-[20px] bg-white border-l border-[#808080]" />
        <div className="ml-[4px] flex gap-[3px]">
          <Task w="w-[160px]" icon={<QTc />} text="Total Commander 7.56a ..." />
          <Task w="w-[160px]" icon={<QOp />} text="ВОПРОС / ОТВЕТ ДЛЯ Н..." track="tracking-[-0.4px]" />
          <Task w="w-[160px]" icon={<Svg><path d="M1 2h14v13H1z" fill="#eef8e0" stroke="#3a9a2a" strokeWidth="1.500" /><path d="M4 5h8M4 8h8M4 11h8" stroke="#3a9a2a" /></Svg>} text="[mmgs] - Окно сообщен..." />
          <Task w="w-[160px]" icon={<Logo />} text="CorelDRAW X5 - [Без..." active />
        </div>
        <div className="ml-[244px] w-[2px] h-[20px] bg-white border-l border-[#808080]" />
        <div className={`ml-[24px] w-[134px] h-[22px] flex items-center pl-[3px] gap-[1px] ${SUNK}`}>
          <Svg><path d="M3 1h8v6H3z" fill="none" stroke="#2a9a2a" strokeWidth="2" /><path d="M4 8h10v8H4z" fill="#f0d048" stroke="#885" /><path d="M0 9h4v4H0z" fill="#2a9a2a" /></Svg>
          <Svg><path d="M1 5h4l5-4v14l-5-4H1z" fill="#9a9a9a" stroke="#444" /><path d="M12 4c2 2 2 6 0 8" stroke="#99c" fill="none" /></Svg>
          <Svg><path d="M1 3h7v6H1z" fill="#c8c8d8" stroke="#667" /><path d="M6 1h6v9H6z" fill="#f0c8a0" stroke="#866" /><path d="M8 10h5l-2.500 5z" fill="#2878d0" /></Svg>
          <Svg><path d="M0 2h16v4H0z" fill="#fff" /><path d="M0 6h16v4H0z" fill="#2040c0" /><path d="M0 10h16v4H0z" fill="#e02020" /></Svg>
          <Svg><path d="M1 1h14v14H1z" fill="#d81818" /><path d="M4 12L9 3c1 3 2 6 4 8-3 0-5-1-6-3" fill="none" stroke="#fff" strokeWidth="2" /></Svg>
          <span className="ml-[6px]">11:13</span>
        </div>
      </div>

      <Dialog />
    </div>
  );
}
